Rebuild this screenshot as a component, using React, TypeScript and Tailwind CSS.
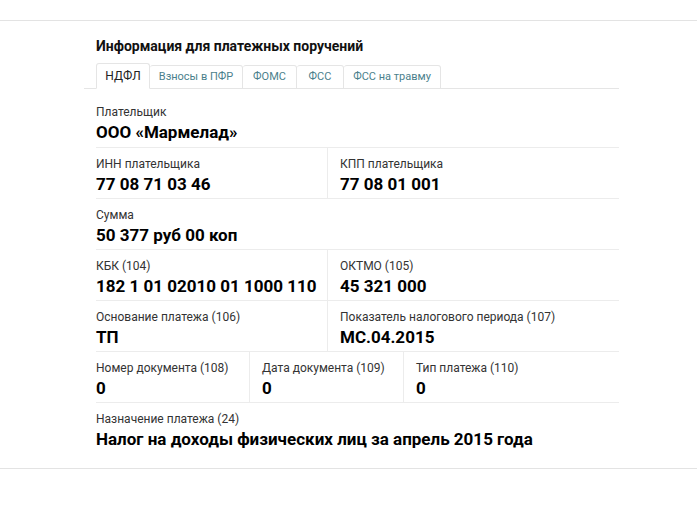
import React from 'react';

const tabs = [
  { label: 'НДФЛ', w: 'w-[54px]', active: true },
  { label: 'Взносы в ПФР', w: 'w-[93px]' },
  { label: 'ФОМС', w: 'w-[54px]' },
  { label: 'ФСС', w: 'w-[47px]' },
  { label: 'ФСС на травму', w: 'w-[97px]' },
];

function Field({ label, value, className = '' }: { label: string; value: string; className?: string }) {
  return (
    <div className={`pt-[7px] ${className}`}>
      <div className="text-[12px] leading-[18px] text-[#333]">{label}</div>
      <div className="text-[17px] leading-[22px] font-bold text-black">{value}</div>
    </div>
  );
}

export default function App() {
  return (
    <div className="w-[697px] h-[511px] bg-white pt-[20px]" style={{ fontFamily: 'Roboto, "Noto Sans", sans-serif' }}>
      <div className="border-t border-b border-[#e3e3e3] h-[449px]">
        <div className="ml-[84px] w-[535px] pt-[16px]">
          <h2 className="ml-3 text-[14px] leading-[18px] font-bold text-[#111]">
            Информация для платежных поручений
          </h2>

          {/* Tabs */}
          <div className="mt-[8px] flex items-end border-b border-[#e5e5e5] pl-3 h-[26px]">
            {tabs.map((t) => (
              <div
                key={t.label}
                className={`${t.w} flex items-center justify-center text-[11px] border border-[#e5e5e5] rounded-t-[3px] -mb-px ${
                  t.active
                    ? 'h-[26px] bg-white border-b-white text-[#222] text-[12px]'
                    : 'h-[24px] border-l-0 text-[#4b7f8c]'
                }`}
              >
                {t.label}
              </div>
            ))}
          </div>

          <div className="ml-3">
            <Field label="Плательщик" value="ООО «Мармелад»" className="h-[59px] pt-[14px] border-b border-[#ececec]" />

            <div className="h-[51px] grid grid-cols-[232px_1fr] border-b border-[#ececec]">
              <Field label="ИНН плательщика" value="77 08 71 03 46" className="border-r border-[#ececec]" />
              <Field label="КПП плательщика" value="77 08 01 001" className="pl-3" />
            </div>

            <Field label="Сумма" value="50 377 руб 00 коп" className="h-[51px] border-b border-[#ececec]" />

            <div className="h-[51px] grid grid-cols-[232px_1fr] border-b border-[#ececec]">
              <Field label="КБК (104)" value="182 1 01 02010 01 1000 110" className="border-r border-[#ececec]" />
              <Field label="ОКТМО (105)" value="45 321 000" className="pl-3" />
            </div>

            <div className="h-[51px] grid grid-cols-[232px_1fr] border-b border-[#ececec]">
              <Field label="Основание платежа (106)" value="ТП" className="border-r border-[#ececec]" />
              <Field label="Показатель налогового периода (107)" value="МС.04.2015" className="pl-3" />
            </div>

            <div className="h-[51px] grid grid-cols-[154px_154px_1fr] border-b border-[#ececec]">
              <Field label="Номер документа (108)" value="0" className="border-r border-[#ececec]" />
              <Field label="Дата документа (109)" value="0" className="pl-3 border-r border-[#ececec]" />
              <Field label="Тип платежа (110)" value="0" className="pl-3" />
            </div>

            <Field label="Назначение платежа (24)" value="Налог на доходы физических лиц за апрель 2015 года" />
          </div>
        </div>
      </div>
    </div>
  );
}
